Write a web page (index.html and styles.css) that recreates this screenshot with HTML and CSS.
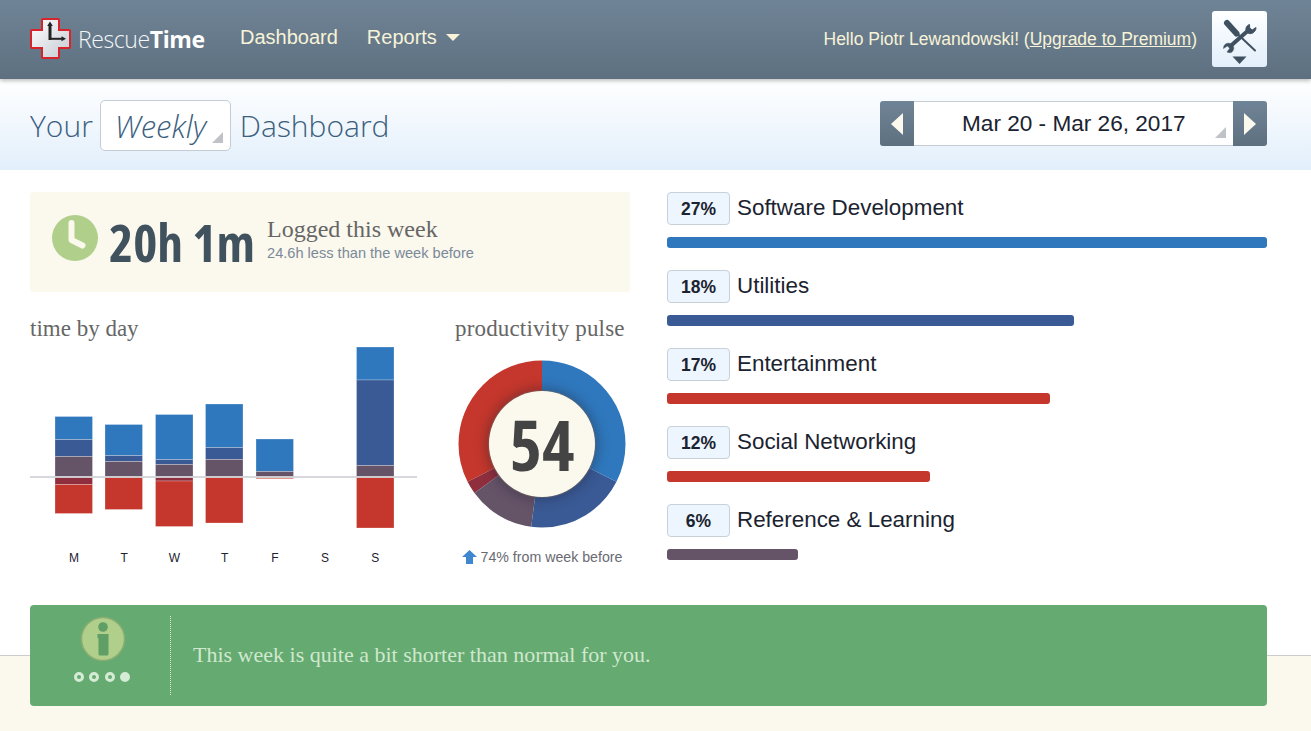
FILE: index.html
```html
<!DOCTYPE html>
<html lang="en">
<head>
  <meta charset="UTF-8" />
  <title>RescueTime Dashboard</title>
  <link rel="stylesheet" href="styles.css">
</head>
<body>
  <header class="topbar">
    <a class="logo">
      <svg width="42" height="42" viewBox="0 0 42 42">
        <defs><linearGradient id="crossFill" x1="0" y1="0" x2="1" y2="1"><stop offset="0" stop-color="#fff"/><stop offset="1" stop-color="#c4cad3"/></linearGradient></defs>
        <path d="M13 1h15a1 1 0 0 1 1 1v10h10a1 1 0 0 1 1 1v16a1 1 0 0 1-1 1h-10v9a1 1 0 0 1-1 1h-15a1 1 0 0 1-1-1v-9h-10a1 1 0 0 1-1-1v-16a1 1 0 0 1 1-1h10v-10a1 1 0 0 1 1-1z" fill="url(#crossFill)" stroke="#d8232b" stroke-width="2"/>
        <path d="M20 7v15" stroke="#222" stroke-width="3"/>
        <path d="M20 3.500l-2.800 4.500h5.600z" fill="#222"/>
        <path d="M19 20.800h13" stroke="#222" stroke-width="2"/>
        <path d="M36 20.800l-4.500-2.500v5z" fill="#222"/>
      </svg>
      <span class="logo-text">Rescue<b>Time</b></span>
    </a>
    <nav class="mainnav">
      <a>Dashboard</a>
      <a>Reports <i class="caret"></i></a>
    </nav>
    <div class="hello">Hello Piotr Lewandowski! (<a>Upgrade to Premium</a>)</div>
    <button class="toolsbtn">
      <svg width="55" height="56" viewBox="0 0 55 56">
        <path d="M15 12l9.500 10.500" stroke="#3f5160" stroke-width="6" stroke-linecap="round"/>
        <path d="M24 21.500l19 18" stroke="#3f5160" stroke-width="2" stroke-linecap="round"/>
        <path d="M18 35.500l17-15" stroke="#3f5160" stroke-width="4"/>
        <path d="M37.500 13.500c-3 1-4.500 4-3 7.500 2.500 2.500 6 2 8-.5 1-1 1.500-2.500 1.500-4l-3.800 2.500-2.500-2z" fill="#3f5160" stroke="#3f5160"/>
        <path d="M20 41c2-2 2.500-5 .5-7-2.500-2.500-5.500-2-7.500-.5-1 1-1.500 2.500-1.500 4l3.800-2.500 2.500 2.200-2.800 3.800c1.800.8 3.500 1 5 0z" fill="#3f5160" stroke="#3f5160" stroke-width=".5"/>
        <path d="M20.500 45.500h14l-7 7.500z" fill="#3f5160"/>
      </svg>
    </button>
  </header>

  <section class="subbar">
    <h1 class="dash-title">Your <span class="period">Weekly<i class="corner"></i></span> Dashboard</h1>
    <div class="datepick">
      <button class="arrow"><i class="tri-left"></i></button>
      <div class="daterange">Mar 20 - Mar 26, 2017<i class="corner"></i></div>
      <button class="arrow"><i class="tri-right"></i></button>
    </div>
  </section>

  <main class="content">
    <div class="leftcol">
      <div class="logged">
        <svg class="clock" width="46" height="46" viewBox="0 0 46 46">
          <circle cx="23" cy="23" r="23" fill="#b0cf8b"/>
          <path d="M19.500 8v17l11 5.500" fill="none" stroke="#fbf8ee" stroke-width="6" stroke-linecap="round" stroke-linejoin="round"/>
        </svg>
        <div class="logged-total">20h 1m</div>
        <div class="logged-info">
          <div class="logged-title">Logged this week</div>
          <div class="logged-sub">24.6h less than the week before</div>
        </div>
      </div>

      <div class="charts">
        <div class="byday">
          <h3 class="charttitle">time by day</h3>
          <svg class="bars" width="387" height="190" viewBox="30 345 387 190">
            <g class="seg">
              <rect class="c1" x="55" y="416.500" width="37.500" height="23"/>
              <rect class="c2" x="55" y="439.500" width="37.500" height="17"/>
              <rect class="c3" x="55" y="456.500" width="37.500" height="20.500"/>
              <rect class="c4" x="55" y="477" width="37.500" height="7.500"/>
              <rect class="c5" x="55" y="484.500" width="37.500" height="29"/>

              <rect class="c1" x="105" y="424.500" width="37.500" height="31"/>
              <rect class="c2" x="105" y="455.500" width="37.500" height="6"/>
              <rect class="c3" x="105" y="461.500" width="37.500" height="15.500"/>
              <rect class="c5" x="105" y="477" width="37.500" height="32.500"/>

              <rect class="c1" x="155.500" y="414.500" width="37.500" height="45"/>
              <rect class="c2" x="155.500" y="459.500" width="37.500" height="5"/>
              <rect class="c3" x="155.500" y="464.500" width="37.500" height="12.500"/>
              <rect class="c4" x="155.500" y="477" width="37.500" height="4"/>
              <rect class="c5" x="155.500" y="481" width="37.500" height="45.500"/>

              <rect class="c1" x="205.500" y="404" width="37.500" height="43.500"/>
              <rect class="c2" x="205.500" y="447.500" width="37.500" height="12"/>
              <rect class="c3" x="205.500" y="459.500" width="37.500" height="17.500"/>
              <rect class="c5" x="205.500" y="477" width="37.500" height="46"/>

              <rect class="c1" x="256" y="439" width="37.500" height="32.500"/>
              <rect class="c3" x="256" y="471.500" width="37.500" height="5.500"/>
              <rect class="c5" x="256" y="477" width="37.500" height="2" opacity=".6"/>

              <rect class="c1" x="356.500" y="347" width="37.500" height="33"/>
              <rect class="c2" x="356.500" y="380" width="37.500" height="85.500"/>
              <rect class="c3" x="356.500" y="465.500" width="37.500" height="11.500"/>
              <rect class="c5" x="356.500" y="477" width="37.500" height="51"/>
            </g>
            <rect x="30" y="476" width="387" height="2" fill="#d4d4d8" opacity=".9"/>
          </svg>
          <div class="daylabels">
            <span>M</span><span>T</span><span>W</span><span>T</span><span>F</span><span>S</span><span>S</span>
          </div>
        </div>

        <div class="pulse">
          <h3 class="charttitle">productivity pulse</h3>
          <div class="donut">
            <svg width="170" height="170" viewBox="0 0 170 170">
              <g class="ring" transform="rotate(-90 85 85)">
                <circle cx="85" cy="85" r="68" pathLength="360" stroke="#c5372c" stroke-dasharray="117 360" stroke-dashoffset="-243"/>
                <circle cx="85" cy="85" r="68" pathLength="360" stroke="#8f2f3e" stroke-dasharray="9 360" stroke-dashoffset="-234"/>
                <circle cx="85" cy="85" r="68" pathLength="360" stroke="#655368" stroke-dasharray="46.500 360" stroke-dashoffset="-187.500"/>
                <circle cx="85" cy="85" r="68" pathLength="360" stroke="#3a5a95" stroke-dasharray="70.500 360" stroke-dashoffset="-117"/>
                <circle cx="85" cy="85" r="68" pathLength="360" stroke="#2f78bd" stroke-dasharray="117 360"/>
              </g>
            </svg>
            <div class="score">54</div>
          </div>
          <div class="change">
            <svg width="15" height="14" viewBox="0 0 15 14"><path d="M7.500 0l7.500 7h-4v7h-7v-7h-4z" fill="#3f88d0"/></svg>
            74% from week before
          </div>
        </div>
      </div>
    </div>

    <div class="rightcol">
      <div class="cat">
        <div class="cat-head"><span class="pct">27%</span><span class="cat-name">Software Development</span></div>
        <div class="cat-bar c-blue" style="width:600px"></div>
      </div>
      <div class="cat">
        <div class="cat-head"><span class="pct">18%</span><span class="cat-name">Utilities</span></div>
        <div class="cat-bar c-navy" style="width:407px"></div>
      </div>
      <div class="cat">
        <div class="cat-head"><span class="pct">17%</span><span class="cat-name">Entertainment</span></div>
        <div class="cat-bar c-red" style="width:383px"></div>
      </div>
      <div class="cat">
        <div class="cat-head"><span class="pct">12%</span><span class="cat-name">Social Networking</span></div>
        <div class="cat-bar c-red" style="width:263px"></div>
      </div>
      <div class="cat">
        <div class="cat-head"><span class="pct">6%</span><span class="cat-name">Reference &amp; Learning</span></div>
        <div class="cat-bar c-purple" style="width:131px"></div>
      </div>
    </div>
  </main>

  <section class="bottom">
    <div class="tip">
      <div class="tip-side">
        <svg width="46" height="46" viewBox="0 0 46 46">
          <circle cx="23" cy="23" r="21.500" fill="#b0cf8b" stroke="#8cae72" stroke-width="1.500"/>
          <circle cx="23" cy="11" r="4.800" fill="#5f9f66"/>
          <path d="M17.500 18h11v20a1.500 1.500 0 0 1-1.500 1.500h-7a1.500 1.500 0 0 1-1.500-1.500v-15.500l-1-.5z" fill="#5f9f66"/>
        </svg>
        <div class="tip-dots"><i></i><i></i><i></i><i class="on"></i></div>
      </div>
      <p class="tip-text">This week is quite a bit shorter than normal for you.</p>
    </div>
  </section>
</body>
</html>
```

FILE: styles.css
```css
*{box-sizing:border-box}
html,body{margin:0;padding:0}
body{width:1311px;height:731px;overflow:hidden;background:#fff;font-family:"Liberation Sans",Arial,sans-serif;color:#1b2330}
h1,h3,p{margin:0;font-weight:normal}
button{border:0;padding:0;background:none}
a{color:inherit}

.topbar{height:79px;display:flex;align-items:center;padding:0 44px 0 30px;background:linear-gradient(#6f8496,#5e7080);box-shadow:0 2px 4px rgba(0,0,0,.25);position:relative;color:#f8f3d8}
.logo{display:flex;align-items:center;width:210px;margin-top:-1px}
.logo-text{margin-left:6px;font-family:"Open Sans",sans-serif;font-weight:300;font-size:23px;letter-spacing:-.4px;color:#f4f6f8}
.logo-text b{font-weight:700;color:#fff}
.mainnav{display:flex;gap:29px;font-size:20px;margin-top:-5px}
.caret{display:inline-block;width:0;height:0;margin-left:4px;border:7px solid transparent;border-top:7px solid #f8f3d8;border-bottom:0;vertical-align:3px}
.hello{margin-left:auto;margin-top:-1px;font-size:17.500px}
.hello a{text-decoration:underline}
.toolsbtn{width:55px;height:56px;margin:-2px 0 0 15px;border-radius:3px;background:linear-gradient(#fff,#e2effb);display:block}
.toolsbtn svg{display:block}

.subbar{height:91px;display:flex;align-items:center;justify-content:space-between;padding:0 44px 0 30px;background:linear-gradient(#fff,#e2effb)}
.dash-title{display:flex;align-items:center;gap:9px;margin-top:2px;font-family:"Open Sans",sans-serif;font-weight:300;font-size:30px;color:#3c5f80}
.period{position:relative;width:131px;height:51px;line-height:51px;margin-left:-2px;padding-left:14px;background:#fff;border:1px solid #c5ccd4;border-radius:5px;font-size:31px;font-style:italic}
.corner{position:absolute;right:7px;bottom:7px;width:0;height:0;border-left:11px solid transparent;border-bottom:11px solid #bfc3c7}
.datepick{display:flex;height:45px;margin-top:-2px}
.arrow{width:34px;display:flex;align-items:center;justify-content:center;background:linear-gradient(#6f8496,#5e7080)}
.datepick .arrow:first-child{border-radius:3px 0 0 3px}
.datepick .arrow:last-child{border-radius:0 3px 3px 0}
.tri-left,.tri-right{width:0;height:0;border-top:11px solid transparent;border-bottom:11px solid transparent}
.tri-left{border-right:12px solid #fbf8ee}
.tri-right{border-left:12px solid #fbf8ee}
.daterange{position:relative;width:319px;line-height:43px;padding-left:48px;background:#fff;border:solid #c5ccd4;border-width:1px 0;font-size:22.600px}

.content{height:435px;display:flex;gap:37px;padding:22px 44px 0 30px}
.leftcol,.rightcol{width:600px}
.logged{height:100px;display:flex;align-items:flex-start;background:#fbf8ee;border-radius:3px;padding:23px 0 0 22px}
.clock{flex:none}
.logged-total{margin:-5px 0 0 11px;font-family:"Open Sans",sans-serif;font-stretch:75%;font-weight:700;font-size:51.500px;line-height:64px;color:#40525e;white-space:nowrap}
.logged-info{margin-left:12px}
.logged-title{font-family:"Liberation Serif",serif;font-size:24px;line-height:28px;color:#666}
.logged-sub{font-size:14.600px;color:#7a8a99;margin-top:2px}

.charts{display:flex;margin-top:23px}
.byday{width:387px}
.charttitle{font-family:"Liberation Serif",serif;font-size:23px;line-height:28px;color:#666}
.bars{display:block;margin-top:2px}
.daylabels{display:flex;margin:16px 0 0 19px;font-size:12px;line-height:14px;color:#1b2330}
.daylabels span{width:50.200px;text-align:center}
.pulse{width:176px;margin-left:37px}
.pulse .charttitle{padding-left:1px;letter-spacing:.16px;white-space:nowrap}
.donut{position:relative;width:170px;height:170px;margin:16px 0 0 3px}
.donut svg{display:block}
.ring circle{fill:none;stroke-width:31}
.score{position:absolute;left:32px;top:32px;width:106px;height:106px;border-radius:50%;background:#fbf8ee;box-shadow:0 0 1px 1px rgba(120,110,100,.5),0 0 12px 3px rgba(30,30,50,.35);display:flex;align-items:center;justify-content:center;font-family:"Open Sans",sans-serif;font-stretch:75%;font-weight:700;font-size:69px;color:#444}
.change{display:flex;align-items:center;justify-content:center;gap:4px;margin-top:20px;font-size:14.200px;color:#6a6a72;white-space:nowrap}

.cat{height:78px}
.cat-head{display:flex;align-items:flex-start;height:45px}
.pct{width:63px;height:33px;line-height:32px;text-align:center;background:#edf6fe;border:1px solid #c8d0d8;border-radius:4px;font-size:17.500px;font-weight:bold}
.cat-name{margin-left:7px;font-size:22.400px;line-height:32px}
.cat-bar{height:11px;border-radius:3px}
.c-blue{background:#2f78bd}
.c-navy{background:#3a5a95}
.c-red{background:#c5372c}
.c-purple{background:#655368}

.seg rect{stroke:rgba(255,255,255,.25);stroke-width:1}
.c1{fill:#2f78bd}
.c2{fill:#3a5a95}
.c3{fill:#655368}
.c4{fill:#8f2f3e}
.c5{fill:#c5372c}

.bottom{height:126px;padding:0 44px 25px 30px;background:linear-gradient(#fff 50px,#ccc 50px,#ccc 51px,#fbf8ee 51px)}
.tip{height:101px;display:flex;align-items:center;background:#65aa70;border-radius:4px}
.tip-side{width:141px;height:79px;display:flex;flex-direction:column;align-items:center;padding:0 0 0 5px;border-right:1px dotted #dff0dc}
.tip-side svg{display:block}
.tip-dots{display:flex;gap:5.300px;margin:10px 0 0 -1px}
.tip-dots i{width:10px;height:10px;border-radius:50%;border:3px solid #d5ebd5}
.tip-dots i.on{background:#d5ebd5}
.tip-text{margin:-2px 0 0 22px;font-family:"Liberation Serif",serif;font-size:22px;color:#cfe8cf}
```
